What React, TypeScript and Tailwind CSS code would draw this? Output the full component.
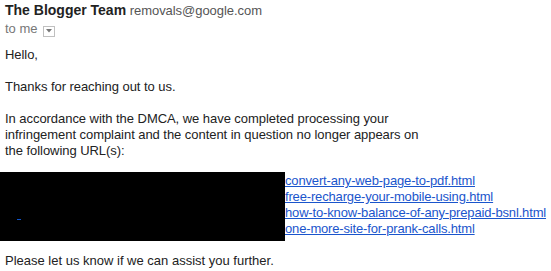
export default function App() {
  const links = [
    "convert-any-web-page-to-pdf.html",
    "free-recharge-your-mobile-using.html",
    "how-to-know-balance-of-any-prepaid-bsnl.html",
    "one-more-site-for-prank-calls.html",
  ];

  return (
    <div className="bg-white w-[551px] h-[271px] overflow-hidden text-[13px] leading-4 text-[#222] font-['Liberation_Sans',Arial,sans-serif]">
      <div className="pl-[5px] pt-[2px]">
        <div className="h-4 whitespace-nowrap">
          <span className="font-bold text-[14px]">The Blogger Team</span>{" "}
          <span className="text-[#555] tracking-[-0.05px]">removals@google.com</span>
        </div>

        <div className="mt-[3px] h-4 flex items-center text-[#777] whitespace-nowrap">
          <span>to me</span>
          <span className="ml-[5px] mt-[4px] w-[12px] h-[11px] border border-[#c0c0c0] bg-white flex items-center justify-center">
            <svg width="6" height="4" viewBox="0 0 6 4">
              <path d="M0 0h6L3 3.5z" fill="#777" />
            </svg>
          </span>
        </div>
      </div>

      <div className="pl-[5px] mt-[10px] tracking-[-0.05px]">
        <p>Hello,</p>
        <p className="mt-4">Thanks for reaching out to us.</p>
        <p className="mt-4">
          In accordance with the DMCA, we have completed processing your
          <br />
          infringement complaint and the content in question no longer appears on
          <br />
          the following URL(s):
        </p>
      </div>

      <div className="mt-[13px] flex">
        <div className="relative w-[285px] h-[69px] bg-black shrink-0">
          <span className="absolute left-[17px] top-[47px] w-[4px] h-px bg-[#15c]" />
        </div>
        <div className="flex flex-col pt-[1px] tracking-[-0.16px]">
          {links.map((l) => (
            <a key={l} href="#" className="text-[#1a55cc] underline whitespace-nowrap">
              {l}
            </a>
          ))}
        </div>
      </div>

      <p className="pl-[5px] mt-[12px]">Please let us know if we can assist you further.</p>
    </div>
  );
}
